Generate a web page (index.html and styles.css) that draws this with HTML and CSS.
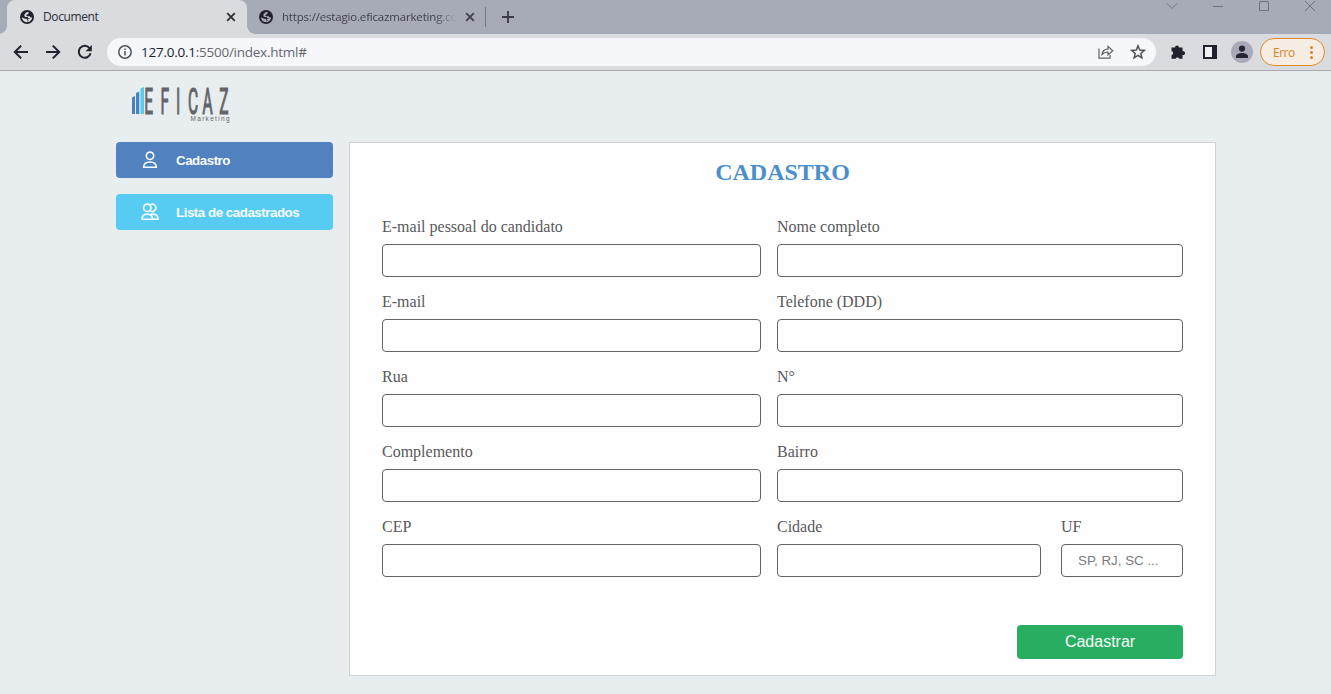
FILE: index.html
```html
<!DOCTYPE html>
<html lang="pt-BR">
<head>
<meta charset="utf-8">
<title>Document</title>
<link rel="stylesheet" href="styles.css">
</head>
<body>
<svg class="defs" width="0" height="0">
  <symbol id="globe" viewBox="0 0 14 14">
    <circle cx="7" cy="7" r="7" fill="#20232d"/>
    <path class="land" d="M8.8 1.9 6.4 2.3 4.4 4.4v1.8l1.2.9h2l.7 1 2.1.2 1.7-1.2C12.2 9.8 10 12.3 7 12.2l.7-2-1-1.2L4.500 8.600 1.800 7.200C2 9.800 4 12 7 12.200l1.500-1.600-.6-1.700 3.200-1-1.400-1.700H7L6.200 5.100 8.200 3.900Z"/>
  </symbol>
  <symbol id="close" viewBox="0 0 10 10"><path d="M1.2 1.2l7.600 7.600M8.800 1.200 1.200 8.800" fill="none" stroke="currentColor" stroke-width="1.8"/></symbol>
</svg>

<header class="browser">
  <div class="tabs">
    <div class="tab tab-active">
      <svg class="favicon"><use href="#globe"/></svg>
      <span class="tab-title">Document</span>
      <svg class="tab-close"><use href="#close"/></svg>
    </div>
    <div class="tab tab-idle">
      <svg class="favicon"><use href="#globe"/></svg>
      <span class="tab-title tab-fade">https://estagio.eficazmarketing.co</span>
      <svg class="tab-close"><use href="#close"/></svg>
    </div>
    <span class="tab-divider"></span>
    <svg class="new-tab" viewBox="0 0 12 12"><path d="M6 0v12M0 6h12" stroke="#383b45" stroke-width="1.8"/></svg>
    <div class="window-buttons">
      <svg viewBox="0 0 12 12"><path d="M1 3.5l5 5 5-5"/></svg>
      <svg viewBox="0 0 12 12"><path d="M1 6.5h10"/></svg>
      <svg viewBox="0 0 12 12"><path d="M1.5 1.5h9v9h-9z"/></svg>
      <svg viewBox="0 0 12 12"><path d="M1 1l10 10M11 1 1 11"/></svg>
    </div>
  </div>
  <div class="toolbar">
    <svg class="nav" viewBox="0 0 16 16"><path d="M15 8H2M8.2 1.6 1.8 8l6.4 6.4"/></svg>
    <svg class="nav" viewBox="0 0 16 16"><path d="M1 8h13M7.8 1.6 14.2 8l-6.4 6.4"/></svg>
    <svg class="nav" viewBox="0 0 16 16"><path d="M13.6 9.3A6 6 0 1 1 12.5 4"/><path class="fill" d="M14.8 1v6.2H8.6z"/></svg>
    <div class="address">
      <svg class="info" viewBox="0 0 14 14"><circle cx="7" cy="7" r="6.2"/><path d="M7 6v4.4M7 3.5v1.6"/></svg>
      <span class="url"><span class="host">127.0.0.1</span>:5500/index.html#</span>
      <svg class="share" viewBox="0 0 16 16"><path d="M1 4.5v9.7h11V11M4 10.5C4.3 7 6.8 5.3 10 5.2V2.3l4.7 4.4L10 11V8.2C7.5 8 5.5 8.7 4 10.5Z"/></svg>
      <svg class="star" viewBox="0 0 16 16"><path d="M8 1.8l1.7 4.3 4.6.3-3.5 3 1.1 4.5L8 11.4l-3.9 2.5 1.1-4.5-3.5-3 4.6-.3z"/></svg>
    </div>
    <svg class="puzzle" viewBox="0 0 16 16"><path d="M1.5 3.5H5a2 2 0 1 1 4 0h3.5v3.7a2 2 0 1 1 0 3.8v3.800H9.400a2 2 0 0 0-3.800 0H1.500v-3.600a2.100 2.100 0 0 0 0-4.100z"/></svg>
    <span class="panel-icon"></span>
    <svg class="avatar" viewBox="0 0 22 22"><circle cx="11" cy="11" r="11" fill="#a7abb9"/><circle cx="11" cy="7.6" r="3.1" fill="#242733"/><path d="M5 17v-1.7c0-2.2 3.5-3.4 6-3.4s6 1.2 6 3.4V17z" fill="#242733"/></svg>
    <div class="error-chip">Erro<span class="dots"><i></i><i></i><i></i></span></div>
  </div>
</header>

<div class="page">
  <aside class="sidebar">
    <svg class="logo" viewBox="0 0 100 40">
      <path d="M0 12.5 3 11v18H0z" fill="#4a80bd"/>
      <path d="M4 8l3.3-1.5V29H4z" fill="#4485c8"/>
      <path d="M8.5 3.5 12 2v27H8.5z" fill="#58c9f0"/>
      <g class="logo-name" transform="scale(.42 1)"><text y="28.5" x="29 68 105 133.500 168 208">EFICAZ</text></g>
      <text class="logo-sub" x="58.5" y="35.800" textLength="39" lengthAdjust="spacing">Marketing</text>
    </svg>
    <nav class="menu">
      <a class="item item-current" href="#">
        <svg viewBox="0 0 18 18"><circle cx="9" cy="4.800" r="3.700"/><path d="M2.700 16.300c0-3.200 2.200-5.300 6.300-5.300s6.300 2.100 6.300 5.300z"/></svg>
        Cadastro
      </a>
      <a class="item item-list" href="#">
        <svg viewBox="0 0 18 18"><circle cx="6.300" cy="4.800" r="3.700"/><path d="M9.300 1.600a3.700 3.700 0 1 1 0 6.400M1 16.300c0-3.100 1.700-5.200 5.100-5.200s5.600 2.100 5.600 5.200zM9 11.800c.8-.5 1.900-.7 3.100-.7 3.300 0 4.900 2.100 4.900 5.200h-5.500"/></svg>
        Lista de cadastrados
      </a>
    </nav>
  </aside>

  <main class="card">
    <h1>CADASTRO</h1>
    <form class="form">
      <label>E-mail pessoal do candidato<input></label>
      <label>Nome completo<input></label>
      <label>E-mail<input></label>
      <label>Telefone (DDD)<input></label>
      <label>Rua<input></label>
      <label>N°<input></label>
      <label>Complemento<input></label>
      <label>Bairro<input></label>
      <label>CEP<input></label>
      <div class="city-row">
        <label>Cidade<input></label>
        <label>UF<input placeholder="SP, RJ, SC ..."></label>
      </div>
    </form>
    <button class="submit" type="button">Cadastrar</button>
  </main>
</div>
</body>
</html>
```

FILE: styles.css
```css
* { box-sizing: border-box; }
body { margin: 0; height: 694px; overflow: hidden; background: #e8edf0; font-family: "Liberation Serif", "Times New Roman", serif; color: #58595b; }
svg { display: block; flex: none; }
.defs { position: absolute; }

.browser { height: 71px; background: #dadbdf; border-bottom: 1px solid #a9aaae; font-family: "Open Sans", sans-serif; }
.tabs { display: flex; height: 34px; padding-left: 7px; background: #a7abb7; align-items: center; }
.tab { display: flex; align-items: center; height: 34px; padding-left: 13px; font-size: 12px; letter-spacing: -0.38px; color: #3f424d; }
.tab-active { position: relative; width: 240px; background: #dadbdf; border-radius: 8px 8px 0 0; color: #2b2e38; --land: #dadbdf; }
.tab-active::before, .tab-active::after { content: ""; position: absolute; bottom: 0; width: 8px; height: 8px; }
.tab-active::before { left: -8px; background: radial-gradient(circle at 0 0, #a7abb7 7.5px, #dadbdf 8px); }
.tab-active::after { right: -8px; background: radial-gradient(circle at 100% 0, #a7abb7 7.5px, #dadbdf 8px); }
.tab-idle { width: 238px; padding-left: 12px; letter-spacing: -0.18px; --land: #a7abb7; }
.favicon { width: 14px; height: 14px; margin-right: 9px; }
.land { fill: var(--land); }
.tab-title { width: 174px; white-space: nowrap; overflow: hidden; line-height: 18px; }
.tab-active .tab-title { width: 183px; }
.tab-fade { margin-right: 9px; font-size: 11.5px; -webkit-mask-image: linear-gradient(90deg, #000 88%, transparent); mask-image: linear-gradient(90deg, #000 88%, transparent); }
.tab-close { width: 10px; height: 10px; }
.tab-divider { width: 1px; height: 20px; background: #73767f; }
.new-tab { width: 12px; height: 12px; margin-left: 16px; }
.window-buttons { display: flex; gap: 34px; margin-left: auto; padding-right: 15px; align-self: flex-start; }
.window-buttons svg { width: 12px; height: 12px; fill: none; stroke: #70727a; stroke-width: 1; }

.toolbar { display: flex; align-items: center; height: 36px; padding: 0 6px 0 13px; }
.nav { width: 16px; height: 16px; margin-right: 16px; fill: none; stroke: #20232d; stroke-width: 2; }
.nav .fill { fill: #20232d; stroke: none; }
.address { display: flex; align-items: center; width: 1049px; height: 28px; margin-left: -2px; padding: 0 10px 0 11px; border-radius: 14px; background: #f5f7fa; }
.info { width: 14px; height: 14px; margin-right: 9px; fill: none; stroke: #50535b; stroke-width: 1.5; }
.url { flex: 1; font-size: 13.5px; letter-spacing: -0.25px; color: #656870; white-space: nowrap; }
.host { color: #20232d; }
.share { width: 16px; height: 16px; margin-right: 16px; fill: none; stroke: #5e6067; stroke-width: 1.2; }
.star { width: 16px; height: 16px; fill: none; stroke: #50535b; stroke-width: 1.5; }
.puzzle { width: 16px; height: 16px; margin-left: 14px; fill: #20232d; }
.panel-icon { width: 14px; height: 14px; margin-left: 17px; border: 2px solid #20232d; border-right-width: 5px; background: #f0f1f4; }
.avatar { width: 22px; height: 22px; margin-left: 14px; }
.error-chip { display: flex; align-items: center; justify-content: space-between; width: 65px; height: 28px; margin-left: auto; padding: 0 11px 0 12px; border: 1px solid #df8a27; border-radius: 14px; background: #f5ece3; color: #d98324; font-size: 12px; letter-spacing: -0.5px; }
.dots { display: grid; gap: 2px; }
.dots i { width: 3px; height: 3px; border-radius: 50%; background: #d98324; }

.page { display: grid; grid-template-columns: 217px 867px; column-gap: 16px; padding-left: 116px; }
.logo { width: 100px; height: 40px; margin: 14px 0 17px 16px; overflow: visible; }
.logo-name { font: 37px Roboto, sans-serif; fill: #636467; stroke: #636467; stroke-width: 1.2; }
.logo-sub { font: 6.5px "Liberation Sans", sans-serif; fill: #636467; }
.menu { display: grid; gap: 16px; }
.item { display: flex; align-items: center; gap: 17px; height: 36px; padding-left: 25px; border-radius: 4px; font: bold 13.333px "Liberation Sans", Arial, sans-serif; letter-spacing: -0.47px; color: #f8fcff; text-decoration: none; }
.item svg { width: 18px; height: 18px; fill: none; stroke: #f8fcff; stroke-width: 1.6; }
.item-current { background: #5181bf; }
.item-list { background: #57ccf2; }

.card { height: 534px; margin-top: 71px; padding: 0 32px; border: 1px solid #d0d4d7; background: #fefefe; }
h1 { margin: 16px 0 32px; font-size: 24px; line-height: 27px; text-align: center; color: #4a8fca; }
.form { display: grid; grid-template-columns: 379px 406px; gap: 16px; }
label { display: block; height: 59px; line-height: 18px; font-size: 16px; }
input { display: block; width: 100%; height: 33px; margin-top: 8px; padding: 0 16px; border: 1px solid #636467; border-radius: 4px; background: #fefefe; font: 13.333px "Liberation Sans", Arial, sans-serif; }
input::placeholder { color: #7b7c80; }
.city-row { display: grid; grid-template-columns: 264px 122px; gap: 20px; }
.submit { display: block; width: 166px; height: 34px; margin: 48px 0 0 auto; padding: 0; border: 0; border-radius: 4px; background: #27ae60; color: #fafffc; font: 16px "Liberation Sans", Arial, sans-serif; }
```
